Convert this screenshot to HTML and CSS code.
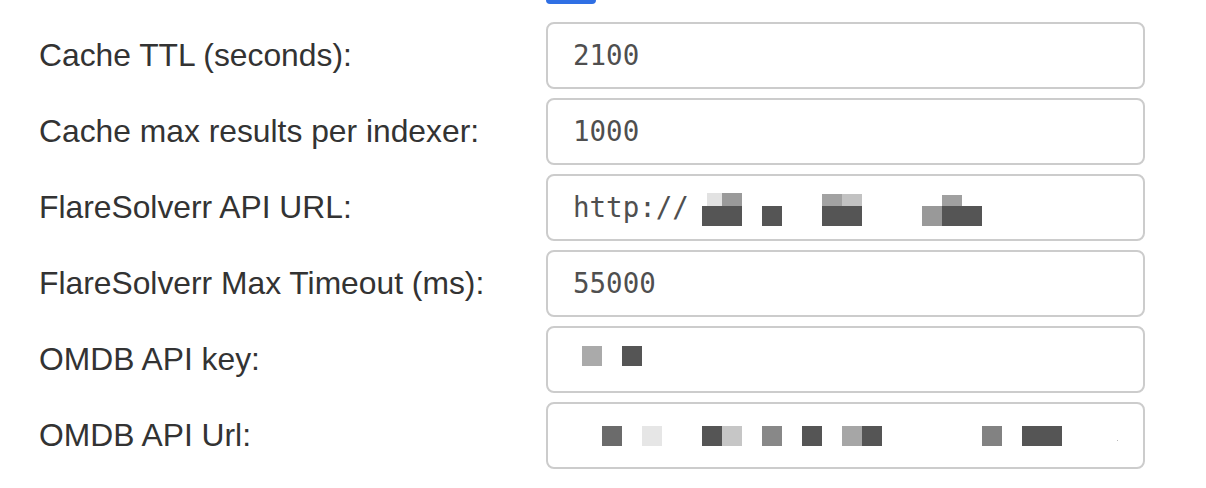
FILE: index.html
```html
<!DOCTYPE html>
<html>
<head>
<meta charset="utf-8">
<link rel="stylesheet" href="styles.css">
</head>
<body>
<div class="form">
  <div class="btn-row"><div class="btn-tail"></div></div>

  <div class="row">
    <label class="label">Cache TTL (seconds):</label>
    <div class="field"><span class="value">2100</span></div>
  </div>

  <div class="row">
    <label class="label">Cache max results per indexer:</label>
    <div class="field"><span class="value">1000</span></div>
  </div>

  <div class="row">
    <label class="label">FlareSolverr API URL:</label>
    <div class="field"><span class="value">http://</span>
      <svg class="redact" width="599" height="67" viewBox="0 0 599 67">
        <rect x="161" y="19" width="15" height="13" fill="#e2e2e2"/>
        <rect x="176" y="19" width="20" height="13" fill="#9a9a9a"/>
        <rect x="156" y="32" width="40" height="20" fill="#555"/>
        <rect x="216" y="32" width="20" height="20" fill="#555"/>
        <rect x="276" y="20" width="20" height="12" fill="#a2a2a2"/>
        <rect x="296" y="20" width="20" height="12" fill="#c2c2c2"/>
        <rect x="276" y="32" width="40" height="20" fill="#555"/>
        <rect x="396" y="21" width="20" height="11" fill="#a0a0a0"/>
        <rect x="376" y="32" width="20" height="20" fill="#999"/>
        <rect x="396" y="32" width="40" height="20" fill="#555"/>
      </svg>
    </div>
  </div>

  <div class="row">
    <label class="label">FlareSolverr Max Timeout (ms):</label>
    <div class="field"><span class="value">55000</span></div>
  </div>

  <div class="row">
    <label class="label">OMDB API key:</label>
    <div class="field">
      <svg class="redact" width="599" height="67" viewBox="0 0 599 67">
        <rect x="36" y="20" width="20" height="20" fill="#aaa"/>
        <rect x="76" y="20" width="20" height="20" fill="#555"/>
      </svg>
    </div>
  </div>

  <div class="row">
    <label class="label">OMDB API Url:</label>
    <div class="field">
      <svg class="redact" width="599" height="67" viewBox="0 0 599 67">
        <rect x="56" y="24" width="20" height="20" fill="#6b6b6b"/>
        <rect x="96" y="24" width="20" height="20" fill="#e6e6e6"/>
        <rect x="156" y="24" width="20" height="20" fill="#555"/>
        <rect x="176" y="24" width="20" height="20" fill="#c6c6c6"/>
        <rect x="216" y="24" width="20" height="20" fill="#888"/>
        <rect x="256" y="24" width="20" height="20" fill="#555"/>
        <rect x="296" y="24" width="20" height="20" fill="#a6a6a6"/>
        <rect x="316" y="24" width="20" height="20" fill="#555"/>
        <rect x="436" y="24" width="20" height="20" fill="#828282"/>
        <rect x="476" y="24" width="40" height="20" fill="#555"/>
        <rect x="571" y="38" width="1" height="1" fill="#bbb"/>
      </svg>
    </div>
  </div>
</div>
</body>
</html>
```

FILE: styles.css
```css
html, body {
  margin: 0;
  padding: 0;
  background: #ffffff;
}

.form {
  padding-left: 39px;
}

.btn-row {
  display: grid;
  grid-template-columns: 507px 599px;
  height: 4px;
  margin-bottom: 18px;
}

.btn-tail {
  grid-column: 2;
  width: 50px;
  height: 4px;
  background: #2f6fe4;
  border-radius: 0 0 4px 4px;
}

.row {
  display: grid;
  grid-template-columns: 507px 599px;
  align-items: center;
  margin-bottom: 9px;
}

.label {
  font-family: "Liberation Sans", Arial, Helvetica, sans-serif;
  font-size: 31.8px;
  color: #333333;
  line-height: 1;
}

.field {
  position: relative;
  box-sizing: border-box;
  height: 67px;
  border: 2px solid #cccccc;
  border-radius: 8px;
  background: #ffffff;
  padding: 0 25px;
  display: flex;
  align-items: center;
}

.value {
  font-family: "DejaVu Sans Mono", Menlo, monospace;
  font-size: 27.5px;
  color: #4f4f4f;
  line-height: 1;
  padding-top: 1px;
}

.redact {
  position: absolute;
  left: -2px;
  top: -2px;
}
```
